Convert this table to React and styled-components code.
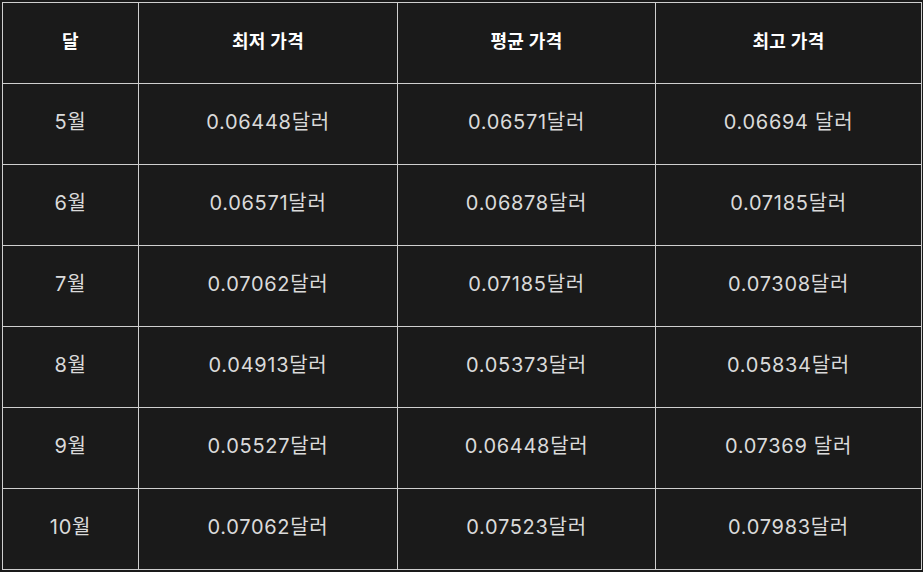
import React from "react";
import styled, { createGlobalStyle } from "styled-components";

const Global = createGlobalStyle`
  html, body { margin: 0; padding: 0; background: #1a1a1a; }
  body { font-family: Inter, "Noto Sans CJK KR", sans-serif; }
`;

const Page = styled.div`
  padding: 2px 0 0 2px;
  width: 923px;
  height: 572px;
  box-sizing: border-box;
  background: #1a1a1a;
`;

const Grid = styled.div`
  display: grid;
  grid-template-columns: 135px 258px 257px 265px;
  grid-auto-rows: 80px;
  gap: 1px;
  padding: 1px;
  width: max-content;
  background: #cfcfcf;
`;

const Cell = styled.div`
  background: #1a1a1a;
  display: flex;
  align-items: center;
  justify-content: center;
  padding-bottom: 7px;
  box-sizing: border-box;
  font-family: Inter, "Noto Sans CJK KR", sans-serif;
  font-size: ${(p) => (p.$head ? "18px" : "20px")};
  font-weight: ${(p) => (p.$head ? 700 : 400)};
  color: ${(p) => (p.$head ? "#ffffff" : "#dadada")};
  letter-spacing: ${(p) => (p.$head ? "0.3px" : "0.7px")};
`;

const head = ["달", "최저 가격", "평균 가격", "최고 가격"];
const rows = [
  ["5월", "0.06448달러", "0.06571달러", "0.06694 달러"],
  ["6월", "0.06571달러", "0.06878달러", "0.07185달러"],
  ["7월", "0.07062달러", "0.07185달러", "0.07308달러"],
  ["8월", "0.04913달러", "0.05373달러", "0.05834달러"],
  ["9월", "0.05527달러", "0.06448달러", "0.07369 달러"],
  ["10월", "0.07062달러", "0.07523달러", "0.07983달러"],
];

export default function App() {
  return (
    <Page>
      <Global />
      <Grid>
        {head.map((h) => (
          <Cell key={h} $head>
            {h}
          </Cell>
        ))}
        {rows.map((r) =>
          r.map((c, i) => <Cell key={r[0] + i}>{c}</Cell>)
        )}
      </Grid>
    </Page>
  );
}
